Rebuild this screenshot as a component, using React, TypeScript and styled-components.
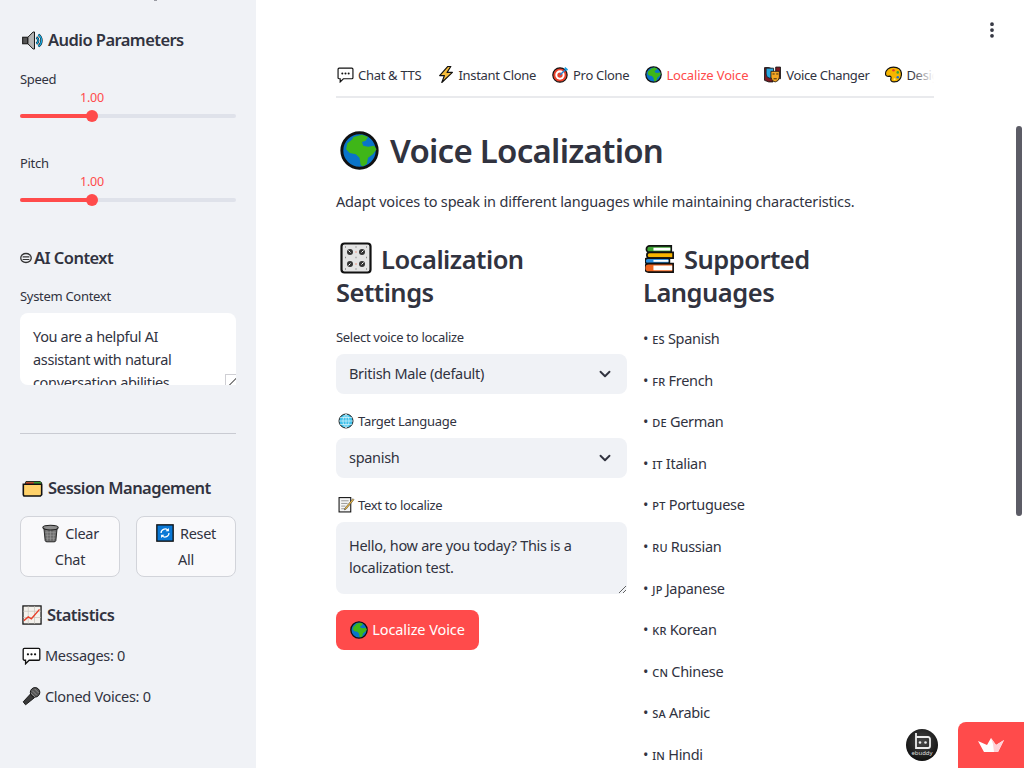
import * as React from "react";
import styled, { createGlobalStyle } from "styled-components";
import { ChevronDown, MoreVertical } from "lucide-react";

const GlobalStyle = createGlobalStyle`
  html, body {
    margin: 0;
    height: 100%;
    overflow: hidden;
    background: #fff;
  }
  body {
    font-family: "Noto Sans", "Liberation Sans", sans-serif;
    color: #31333f;
  }
  * { box-sizing: border-box; }
`;

const Page = styled.div`
  display: flex;
  width: 1024px;
  height: 768px;
  overflow: hidden;
  position: relative;
`;

const Sidebar = styled.aside`
  width: 256px;
  flex: none;
  height: 768px;
  background: #f0f2f6;
  padding: 28px 20px 0;
  overflow: hidden;
  position: relative;
  &::before {
    content: "";
    position: absolute;
    left: 154px;
    top: 0;
    width: 3px;
    height: 1px;
    background: #9a9ba3;
  }
`;

const EmojiSvg = styled.svg<{ $ml?: number; $mr?: number; $va?: number }>`
  display: inline-block;
  margin: -12px ${(p) => p.$mr ?? 4}px 0 ${(p) => p.$ml ?? 0}px;
  vertical-align: ${(p) => p.$va ?? -3}px;
`;

const SideHeading = styled.h3<{ $gap?: number }>`
  margin: 0;
  font-size: 16.5px;
  font-weight: 600;
  line-height: 24px;
  letter-spacing: -0.55px;
  white-space: nowrap;
  margin-top: ${(p) => p.$gap ?? 0}px;
`;

const SliderBlock = styled.div<{ $gap: number }>`
  margin-top: ${(p) => p.$gap}px;
  height: 48px;
  position: relative;
`;

const SmallLabel = styled.div`
  font-size: 13px;
  line-height: 18px;
  letter-spacing: -0.3px;
  white-space: nowrap;
`;

const SliderValue = styled.div`
  position: absolute;
  left: 60px;
  top: 19px;
  font-size: 12.5px;
  line-height: 18px;
  color: #ff4b4b;
  letter-spacing: -0.2px;
`;

const Track = styled.div`
  position: absolute;
  left: 0;
  right: 0;
  top: 44px;
  height: 4px;
  border-radius: 2px;
  background: #dfe2ea;
`;

const TrackFill = styled.div`
  height: 4px;
  border-radius: 2px;
  background: #ff4b4b;
`;

const Thumb = styled.div`
  position: absolute;
  top: -4px;
  width: 12px;
  height: 12px;
  border-radius: 50%;
  background: #ff4b4b;
`;

const ContextLabel = styled(SmallLabel)`
  margin-top: 17px;
`;

const ContextWrap = styled.div`
  position: relative;
  margin-top: 8px;
  height: 72px;
`;

const ContextBox = styled.textarea`
  display: block;
  width: 216px;
  height: 72px;
  padding: 12px 36px 12px 13px;
  border: none;
  outline: none;
  border-radius: 8px;
  background: #fff;
  color: #31333f;
  font-family: inherit;
  font-size: 14.5px;
  line-height: 23px;
  letter-spacing: -0.35px;
  overflow: hidden;
  resize: none;
`;

const ContextGrip = styled.div`
  position: absolute;
  right: 0;
  bottom: 0;
  width: 11px;
  height: 11px;
  border-top: 1px solid #cfcfd4;
  border-left: 1px solid #cfcfd4;
  background: linear-gradient(135deg, transparent 45%, #888 45%, #888 60%, transparent 60%) no-repeat right bottom / 7px 7px, #fff;
`;

const Divider = styled.hr`
  margin: 48px 0 0;
  border: none;
  border-top: 1px solid #c9cbd2;
`;

const ButtonRow = styled.div`
  display: flex;
  gap: 16px;
  margin-top: 16px;
`;

const SideButton = styled.div`
  flex: 1;
  height: 61px;
  border: 1px solid #d2d4da;
  border-radius: 8px;
  background: #f9f9fb;
  padding: 3px 18px;
  text-align: center;
  font-size: 14.5px;
  line-height: 26px;
  letter-spacing: -0.3px;
`;

const StatLine = styled.div<{ $gap: number }>`
  margin-top: ${(p) => p.$gap}px;
  font-size: 14.5px;
  line-height: 23px;
  letter-spacing: -0.3px;
  white-space: nowrap;
`;

const Main = styled.main`
  flex: 1;
  position: relative;
  padding: 64px 90px 0 80px;
  overflow: hidden;
`;

const TabBar = styled.div`
  width: 598px;
  height: 34px;
  display: flex;
  gap: 16px;
  border-bottom: 2px solid #e9eaed;
  overflow: hidden;
  position: relative;
  &::after {
    content: "";
    position: absolute;
    right: 0;
    top: 0;
    width: 22px;
    height: 30px;
    background: linear-gradient(to right, rgba(255, 255, 255, 0), #fff);
  }
`;

const Tab = styled.div<{ $active?: boolean; $ls?: number }>`
  flex: none;
  height: 34px;
  padding-top: 1px;
  font-size: 13px;
  line-height: 20px;
  letter-spacing: ${(p) => p.$ls ?? -0.3}px;
  white-space: nowrap;
  color: ${(p) => (p.$active ? "#ff4b4b" : "#31333f")};
  border-bottom: 2px solid ${(p) => (p.$active ? "#ff4b4b" : "transparent")};
`;

const Title = styled.h1`
  margin: 30px 0 0;
  font-size: 33px;
  line-height: 46px;
  font-weight: 600;
  letter-spacing: -0.75px;
  white-space: nowrap;
`;

const Lead = styled.p`
  margin: 15px 0 0;
  font-size: 14.5px;
  line-height: 24px;
  letter-spacing: -0.18px;
  white-space: nowrap;
`;

const Columns = styled.div`
  display: grid;
  grid-template-columns: 291px 291px;
  gap: 16px;
  width: 598px;
  margin-top: 30px;
`;

const Column = styled.section``;

const SectionTitle = styled.h2`
  margin: 0;
  width: 240px;
  font-size: 25.5px;
  line-height: 33px;
  font-weight: 600;
  letter-spacing: -0.5px;
`;

const FieldLabel = styled(SmallLabel)<{ $gap: number }>`
  margin-top: ${(p) => p.$gap}px;
  height: 18px;
`;

const SelectBox = styled.div`
  margin-top: 8px;
  height: 40px;
  border-radius: 8px;
  background: #f0f2f6;
  padding: 0 13px;
  display: flex;
  align-items: center;
  justify-content: space-between;
  font-size: 14.5px;
  letter-spacing: -0.3px;
`;

const SelectValue = styled.span`
  margin-bottom: 2px;
`;

const TextBox = styled.textarea`
  display: block;
  width: 291px;
  height: 72px;
  margin-top: 8px;
  padding: 13px 13px;
  border: none;
  outline: none;
  border-radius: 8px;
  background: #f0f2f6;
  color: #31333f;
  font-family: inherit;
  font-size: 14.5px;
  line-height: 21.6px;
  letter-spacing: -0.3px;
  overflow: hidden;
  resize: vertical;
`;

const PrimaryButton = styled.div`
  margin-top: 16px;
  width: 143px;
  height: 40px;
  border-radius: 8px;
  background: #ff4b4b;
  color: #fff;
  text-align: center;
  font-size: 14.5px;
  line-height: 39px;
  letter-spacing: -0.08px;
  white-space: nowrap;
`;

const LangList = styled.div`
  margin-top: 17px;
`;

const LangRow = styled.div`
  height: 41.6px;
  font-size: 14.5px;
  line-height: 24px;
  letter-spacing: -0.3px;
  white-space: nowrap;
`;

const LangCode = styled.span`
  font-size: 11px;
  font-weight: 500;
  letter-spacing: 0.3px;
  margin: 0 3px 0 4px;
`;

const MenuDots = styled.div`
  position: absolute;
  left: 726px;
  top: 20px;
  color: #31333f;
  display: flex;
`;

const ScrollThumb = styled.div`
  position: absolute;
  right: 2px;
  top: 126px;
  width: 6px;
  height: 390px;
  border-radius: 3px;
  background: #5c5c66;
`;

const Badge = styled.div`
  position: absolute;
  left: 906px;
  top: 729px;
  width: 32px;
  height: 32px;
  border-radius: 50%;
  background: radial-gradient(circle at 50% 40%, #4a4a4a, #111 75%);
  display: flex;
  justify-content: center;
`;

const Corner = styled.div`
  position: absolute;
  left: 958px;
  top: 722px;
  width: 66px;
  height: 46px;
  border-top-left-radius: 8px;
  background: #ff4b4b;
  display: flex;
  justify-content: center;
  align-items: center;
`;

const K = "#111";

const drawings: Record<string, React.ReactNode> = {
  speaker: (
    <>
      <rect x="1" y="11" width="8" height="10" fill="#555" stroke={K} strokeWidth="1.5" />
      <path d="M9 11l8-8h2v26h-2l-8-8z" fill="#b5b5b5" stroke={K} strokeWidth="1.5" />
      <path d="M22 11a6 6 0 0 1 0 10M25 7a11 11 0 0 1 0 18" fill="none" stroke={K} strokeWidth="3.6" />
      <path d="M22 11a6 6 0 0 1 0 10M25 7a11 11 0 0 1 0 18" fill="none" stroke="#19aee8" strokeWidth="2" />
    </>
  ),
  brain: (
    <>
      <ellipse cx="16" cy="16" rx="14" ry="12" fill="#f0f2f6" stroke="#333" strokeWidth="3.5" />
      <path d="M7 13h18M7 20h18" stroke="#333" strokeWidth="3" />
    </>
  ),
  folder: (
    <>
      <path d="M5 10l1-3h22l2 2v3H5z" fill="#3fa535" stroke={K} strokeWidth="1.4" />
      <path d="M6 8h12v3H6z" fill="#d8392b" />
      <path d="M2 11h27l1 1v15l-2 2H3l-1-2z" fill="#ffd26a" stroke={K} strokeWidth="2.4" />
    </>
  ),
  trash: (
    <>
      <path d="M5 8l2 20a3 3 0 0 0 3 2h12a3 3 0 0 0 3-2l2-20z" fill="#6d6d6d" stroke="#222" strokeWidth="1.6" />
      <path d="M10 10l1 18M16 10v18M22 10l-1 18M7 14h18M8 19h16M8 24h16" stroke="#9d9d9d" strokeWidth="1" />
      <ellipse cx="16" cy="6" rx="13" ry="4" fill="#8f8f8f" stroke="#222" strokeWidth="1.8" />
    </>
  ),
  reset: (
    <>
      <rect x="1.5" y="1.5" width="29" height="29" fill="#0a78d6" stroke={K} strokeWidth="2.4" />
      <path d="M9 16a7 7 0 0 1 12-5M23 16a7 7 0 0 1-12 5" fill="none" stroke="#fff" strokeWidth="2.2" />
      <path d="M23 7v6h-6zM9 25v-6h6z" fill="#fff" />
    </>
  ),
  chart: (
    <>
      <rect x="1.5" y="1.5" width="29" height="29" fill="#f4f1ec" stroke={K} strokeWidth="2" />
      <path d="M10 2v28M20 2v28M2 10h28M2 20h28" stroke="#c9c5bf" strokeWidth="1.2" />
      <path d="M3 25l7-6 5 3 13-15" fill="none" stroke="#e8402a" strokeWidth="2.2" />
    </>
  ),
  speech: (
    <>
      <path d="M4 4h24a2 2 0 0 1 2 2v16a2 2 0 0 1-2 2H12l-6 6v-6H4a2 2 0 0 1-2-2V6a2 2 0 0 1 2-2z" fill="#fff" stroke={K} strokeWidth="2.2" />
      <circle cx="10" cy="14" r="1.9" fill={K} />
      <circle cx="16" cy="14" r="1.9" fill={K} />
      <circle cx="22" cy="14" r="1.9" fill={K} />
    </>
  ),
  mic: (
    <>
      <path d="M15 11L2 25l4 5 15-12z" fill="#3a3a3a" stroke={K} strokeWidth="1.5" />
      <circle cx="22" cy="9" r="8" fill="#555" stroke={K} strokeWidth="1.6" />
      <path d="M17 6l8 8M21 3l7 7M15 10l7 7" stroke="#999" strokeWidth="1.3" />
    </>
  ),
  bolt: (
    <path d="M20 1L5 18h9l-5 13 20-19h-10l7-11z" fill="#f6bd3b" stroke={K} strokeWidth="2.2" strokeLinejoin="round" />
  ),
  target: (
    <>
      <circle cx="15" cy="17" r="13.5" fill="#e8402a" stroke={K} strokeWidth="2.2" />
      <circle cx="15" cy="17" r="8.8" fill="#fff" />
      <circle cx="15" cy="17" r="5" fill="#e8402a" />
      <path d="M15 17L27 5" stroke="#1f7fd0" strokeWidth="2.6" />
      <path d="M24 3l5 5" stroke="#1f9fe0" strokeWidth="3.4" />
    </>
  ),
  globe: (
    <>
      <circle cx="16" cy="16" r="14.5" fill="#0a74c9" stroke={K} strokeWidth="2.4" />
      <path d="M11 5l7-2 5 2-2 3-3 1 1 3 4 1 5-1 2 3-3 4-4 3-1 5-3 2-2-1-1-6-3-3-5-1-3-3 1-5 4-3z" fill="#3fb618" />
    </>
  ),
  masks: (
    <>
      <path d="M1 3h8l8 3v24H9l-8-3z" fill="#7a1a22" stroke={K} strokeWidth="1.6" />
      <path d="M22 2h9v22h-9z" fill="#7a1a22" stroke={K} strokeWidth="1.6" />
      <path d="M4 4h14v11q0 7-7 8-7-1-7-8z" fill="#2aa7e0" stroke={K} strokeWidth="1.4" />
      <path d="M13 10h16v11q-1 8-8 9-7-1-8-9z" fill="#f4a623" stroke={K} strokeWidth="1.5" />
      <path d="M16 15h4M23 15h4M18 24h6" stroke={K} strokeWidth="1.5" />
    </>
  ),
  palette: (
    <>
      <path d="M16 2C7 2 1 8 1 15c0 4 4 5 7 4 3 0 4 2 3 5-1 4 2 6 6 6 9 0 14-7 14-15S25 2 16 2z" fill="#f7b500" stroke={K} strokeWidth="2.2" />
      <circle cx="16" cy="8" r="2.4" fill="#e8402a" />
      <circle cx="24" cy="12" r="2.4" fill="#3fa535" />
      <circle cx="24" cy="21" r="2.4" fill="#1f6fd0" />
      <circle cx="18" cy="25" r="2" fill="#ffe680" />
    </>
  ),
  knobs: (
    <>
      <rect x="1.5" y="1.5" width="29" height="29" rx="3" fill="#e4e4e4" stroke={K} strokeWidth="2.2" />
      <circle cx="10" cy="10" r="3" fill="#333" />
      <circle cx="22" cy="10" r="3" fill="#333" />
      <circle cx="10" cy="22" r="3" fill="#333" />
      <circle cx="22" cy="22" r="3" fill="#333" />
      <path d="M8.5 8.5l2 2M23.5 8.5l-2 2M8.5 23.5l2-2M23.5 20.5l-2 2" stroke="#fff" strokeWidth="1" />
      <path d="M5 5h1M15.5 5h1M26 5h1M5 15.5h1M15.5 15.5h1M26 15.5h1M5 27h1M15.5 27h1M26 27h1" stroke="#8c8c8c" strokeWidth="1.4" />
      <path d="M15.5 10h1M15.5 22h1" stroke="#e8806a" strokeWidth="1.4" />
    </>
  ),
  web: (
    <>
      <circle cx="16" cy="16" r="14" fill="#3fc1ea" stroke="#222" strokeWidth="2" />
      <path d="M2 16h28M4 9h24M4 23h24M16 2v28M16 2c-8 8-8 20 0 28M16 2c8 8 8 20 0 28" fill="none" stroke="#f1fbff" strokeWidth="1.2" />
    </>
  ),
  memo: (
    <>
      <rect x="2" y="3" width="22" height="27" fill="#f5f5f5" stroke={K} strokeWidth="2" />
      <path d="M6 9h14M6 14h12M6 19h8M6 24h8" stroke="#8a8a8a" strokeWidth="1.6" />
      <path d="M13 23L28 5l2 2-15 18-3 1z" fill="#f6bd3b" stroke="#333" strokeWidth="1" />
    </>
  ),
  books: (
    <>
      <path d="M5 2h23v7H5a3.5 3.5 0 0 1 0-7z" fill="#3fa535" stroke={K} strokeWidth="1.8" />
      <path d="M9 4h18v3H9z" fill="#fff" />
      <path d="M5 9h25v6H5a3 3 0 0 1 0-6z" fill="#f7b500" stroke={K} strokeWidth="1.8" />
      <path d="M3 15h23v6H3a3 3 0 0 1 0-6z" fill="#2b8fe0" stroke={K} strokeWidth="1.8" />
      <path d="M9 17h16v2H9z" fill="#fff" />
      <path d="M4 21h26v9H4a4.5 4.5 0 0 1 0-9z" fill="#f0641e" stroke={K} strokeWidth="1.8" />
      <path d="M9 23h20v5H9z" fill="#fff" />
    </>
  ),
};

type EmojiProps = { name: string; size: number; ml?: number; mr?: number; va?: number };

const Emoji = ({ name, size, ml, mr, va }: EmojiProps) => (
  <EmojiSvg width={size} height={size} viewBox="0 0 32 32" $ml={ml} $mr={mr} $va={va} aria-hidden="true">
    {drawings[name]}
  </EmojiSvg>
);

const languages: [string, string][] = [
  ["ES", "Spanish"],
  ["FR", "French"],
  ["DE", "German"],
  ["IT", "Italian"],
  ["PT", "Portuguese"],
  ["RU", "Russian"],
  ["JP", "Japanese"],
  ["KR", "Korean"],
  ["CN", "Chinese"],
  ["SA", "Arabic"],
  ["IN", "Hindi"],
];

const Slider = ({ label, gap }: { label: string; gap: number }) => (
  <SliderBlock $gap={gap}>
    <SmallLabel>{label}</SmallLabel>
    <SliderValue>1.00</SliderValue>
    <Track>
      <TrackFill style={{ width: 72 }} />
      <Thumb style={{ left: 66 }} />
    </Track>
  </SliderBlock>
);

export default function App() {
  return (
    <Page>
      <GlobalStyle />
      <Sidebar>
        <SideHeading>
          <Emoji name="speaker" size={21} ml={2} mr={5} va={-5} />
          Audio Parameters
        </SideHeading>
        <Slider label="Speed" gap={18} />
        <Slider label="Pitch" gap={36} />
        <SideHeading $gap={44}>
          <Emoji name="brain" size={12} ml={0} mr={2} va={0} />
          AI Context
        </SideHeading>
        <ContextLabel>System Context</ContextLabel>
        <ContextWrap>
          <ContextBox readOnly value="You are a helpful AI assistant with natural conversation abilities" />
          <ContextGrip />
        </ContextWrap>
        <Divider />
        <SideHeading $gap={42}>
          <Emoji name="folder" size={21} ml={2} mr={5} va={-4} />
          Session Management
        </SideHeading>
        <ButtonRow>
          <SideButton>
            <Emoji name="trash" size={19} mr={5} va={-4} />
            Clear Chat
          </SideButton>
          <SideButton>
            <Emoji name="reset" size={18} mr={6} va={-3} />
            Reset All
          </SideButton>
        </ButtonRow>
        <SideHeading $gap={26}>
          <Emoji name="chart" size={20} ml={2} mr={5} va={-4} />
          Statistics
        </SideHeading>
        <StatLine $gap={17}>
          <Emoji name="speech" size={19} ml={2} mr={4} va={-4} />
          Messages: 0
        </StatLine>
        <StatLine $gap={18}>
          <Emoji name="mic" size={19} ml={2} mr={4} va={-4} />
          Cloned Voices: 0
        </StatLine>
      </Sidebar>
      <Main>
        <TabBar>
          <Tab>
            <Emoji name="speech" size={17} ml={1} mr={4} />
            Chat &amp; TTS
          </Tab>
          <Tab>
            <Emoji name="bolt" size={17} mr={4} />
            Instant Clone
          </Tab>
          <Tab>
            <Emoji name="target" size={17} mr={4} />
            Pro Clone
          </Tab>
          <Tab $active $ls={-0.15}>
            <Emoji name="globe" size={17} mr={4} />
            Localize Voice
          </Tab>
          <Tab $ls={-0.38}>
            <Emoji name="masks" size={17} mr={5} />
            Voice Changer
          </Tab>
          <Tab>
            <Emoji name="palette" size={17} mr={4} />
            Design
          </Tab>
        </TabBar>
        <Title>
          <Emoji name="globe" size={39} ml={4} mr={11} va={-7} />
          Voice Localization
        </Title>
        <Lead>Adapt voices to speak in different languages while maintaining characteristics.</Lead>
        <Columns>
          <Column>
            <SectionTitle>
              <Emoji name="knobs" size={32} ml={4} mr={9} va={-5} />
              Localization Settings
            </SectionTitle>
            <FieldLabel $gap={19}>Select voice to localize</FieldLabel>
            <SelectBox>
              <SelectValue>British Male (default)</SelectValue>
              <ChevronDown size={18} strokeWidth={2.5} />
            </SelectBox>
            <FieldLabel $gap={18}>
              <Emoji name="web" size={16} ml={2} />
              Target Language
            </FieldLabel>
            <SelectBox>
              <SelectValue>spanish</SelectValue>
              <ChevronDown size={18} strokeWidth={2.5} />
            </SelectBox>
            <FieldLabel $gap={18}>
              <Emoji name="memo" size={17} ml={2} mr={3} />
              Text to localize
            </FieldLabel>
            <TextBox readOnly value="Hello, how are you today? This is a localization test." />
            <PrimaryButton>
              <Emoji name="globe" size={18} mr={4} va={-4} />
              Localize Voice
            </PrimaryButton>
          </Column>
          <Column>
            <SectionTitle>
              <Emoji name="books" size={30} ml={2} mr={9} va={-5} />
              Supported Languages
            </SectionTitle>
            <LangList>
              {languages.map(([code, name]) => (
                <LangRow key={code}>
                  •<LangCode>{code}</LangCode>
                  {name}
                </LangRow>
              ))}
            </LangList>
          </Column>
        </Columns>
        <MenuDots>
          <MoreVertical size={20} strokeWidth={2.5} />
        </MenuDots>
      </Main>
      <ScrollThumb />
      <Badge>
        <svg width="30" height="32" viewBox="0 0 30 32">
          <path d="M9 4v15h12a2 2 0 0 0 2-2v-7a2 2 0 0 0-2-2H9" fill="none" stroke="#eee" strokeWidth="1.8" />
          <circle cx="13" cy="13.5" r="1.3" fill="#eee" />
          <circle cx="18.5" cy="13.5" r="1.3" fill="#eee" />
          <text x="15" y="26" textAnchor="middle" fontSize="6" fill="#ddd" fontFamily="Noto Sans, sans-serif">ebuddy</text>
        </svg>
      </Badge>
      <Corner>
        <svg width="26" height="15" viewBox="0 0 26 15">
          <path d="M0 3l6 11h14L26 2l-8 5-5-7-4 7z" fill="#fff" />
          <path d="M13 0l5 7 8-5-6 12h-4l-1-8z" fill="#ffd0d6" />
        </svg>
      </Corner>
    </Page>
  );
}
